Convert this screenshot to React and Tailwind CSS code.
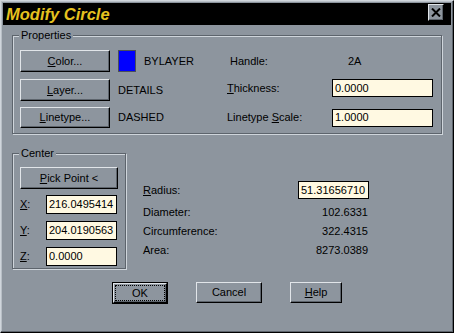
import React from 'react';

const bevel =
  'border border-t-[#e1e5e9] border-l-[#e1e5e9] border-r-black border-b-black shadow-[inset_-1px_-1px_0_#5d646c]';

const Btn = ({ className = '', children }) => (
  <div className={`${bevel} flex items-center justify-center bg-[#8d959e] ${className}`}>
    <span className="leading-none">{children}</span>
  </div>
);

const Field = ({ className = '', children }) => (
  <div
    className={`border border-black bg-[#fff9e2] flex items-center pl-[2px] leading-none ${className}`}
  >
    {children}
  </div>
);

const Group = ({ title, className = '', children }) => (
  <div
    className={`relative border border-[#5d646c] shadow-[1px_1px_0_#cfd5db,inset_1px_1px_0_#cfd5db] ${className}`}
  >
    <span className="absolute -top-[8px] left-[6px] bg-[#8d959e] px-[2px] leading-[14px]">{title}</span>
    {children}
  </div>
);

export default function App() {
  return (
    <div className="w-[454px] h-[333px] bg-[#8d959e] border border-t-[#d0d6dc] border-l-[#d0d6dc] border-r-black border-b-black shadow-[inset_-1px_-1px_0_#5d646c,inset_1px_1px_0_#b8bfc6] p-[2px] flex flex-col font-['Liberation_Sans',Arial,sans-serif] text-[11px] text-black">
      {/* title bar */}
      <div className="h-[22px] bg-black flex items-center justify-between pl-[3px] pr-[7px]">
        <span className="text-[16.5px] font-bold italic text-[#e6c21f] leading-none">Modify Circle</span>
        <div className={`${bevel} w-[16px] h-[17px] bg-[#8d959e] flex items-center justify-center -mt-[3px]`}>
          <svg width="10" height="9" viewBox="0 0 10 9">
            <path d="M1 0.5 L9 8.5 M9 0.5 L1 8.5" stroke="black" strokeWidth="2" />
          </svg>
        </div>
      </div>

      <div className="flex-1 flex flex-col px-[9px] pt-[10px]">
        {/* Properties */}
        <Group title="Properties" className="h-[99px] pt-[14px] pl-[7px] flex flex-col">
          <div className="flex items-center h-[22px]">
            <Btn className="w-[90px] h-[22px]">
              <u>C</u>olor...
            </Btn>
            <div className="w-[109px] ml-[8px] flex items-center">
              <div className="w-[18px] h-[22px] bg-[#0000ff] border border-[#4a5058]"></div>
              <span className="ml-[8px]">BYLAYER</span>
            </div>
            <span className="w-[105px] pl-[3px]">Handle:</span>
            <span className="pl-[16px]">2A</span>
          </div>
          <div className="flex items-start h-[22px] mt-[7px]">
            <Btn className="w-[90px] h-[22px]">
              <u>L</u>ayer...
            </Btn>
            <span className="w-[109px] ml-[8px] self-center">DETAILS</span>
            <span className="w-[105px] self-center -mt-[4px]">
              <u>T</u>hickness:
            </span>
            <Field className="w-[101px] h-[18px]">0.0000</Field>
          </div>
          <div className="flex items-center h-[21px] mt-[6px]">
            <Btn className="w-[90px] h-[21px]">
              <u>L</u>inetype...
            </Btn>
            <span className="w-[109px] ml-[8px]">DASHED</span>
            <span className="w-[105px]">
              Linetype <u>S</u>cale:
            </span>
            <Field className="w-[101px] h-[18px]">1.0000</Field>
          </div>
        </Group>

        {/* Center + derived values */}
        <div className="flex mt-[19px]">
          <Group title="Center" className="w-[114px] h-[116px] pt-[13px] px-[7px] flex flex-col">
            <Btn className="w-full h-[22px]">
              <u>P</u>ick Point &lt;
            </Btn>
            {[
              ['X', '216.0495414'],
              ['Y', '204.0190563'],
              ['Z', '0.0000'],
            ].map(([k, v], i) => (
              <div key={k} className={`flex items-center h-[19px] ${i === 0 ? 'mt-[6px]' : 'mt-[7px]'}`}>
                <span className="w-[26px]">
                  <u>{k}</u>:
                </span>
                <Field className="w-[71px] h-[19px]">{v}</Field>
              </div>
            ))}
          </Group>

          <div className="ml-[17px] pt-[28px] w-[226px] flex flex-col">
            <div className="flex items-center justify-between h-[18px]">
              <span>
                <u>R</u>adius:
              </span>
              <Field className="w-[71px] h-[18px]">51.31656710</Field>
            </div>
            {[
              ['Diameter:', '102.6331'],
              ['Circumference:', '322.4315'],
              ['Area:', '8273.0389'],
            ].map(([k, v], i) => (
              <div key={k} className={`flex items-center justify-between h-[19px] ${i === 0 ? 'mt-[4px]' : ''}`}>
                <span>{k}</span>
                <span className="pr-[1px]">{v}</span>
              </div>
            ))}
          </div>
        </div>

        {/* dialog buttons */}
        <div className="flex justify-center items-start gap-[28px] mt-[13px]">
          <div className="w-[56px] h-[22px] border border-black flex">
            <div className={`${bevel} flex-1 flex p-[1px]`}>
              <div className="flex-1 border border-dotted border-black flex items-center justify-center leading-none">
                OK
              </div>
            </div>
          </div>
          <Btn className="w-[66px] h-[21px]">Cancel</Btn>
          <Btn className="w-[52px] h-[21px]">
            <u>H</u>elp
          </Btn>
        </div>
      </div>
    </div>
  );
}
